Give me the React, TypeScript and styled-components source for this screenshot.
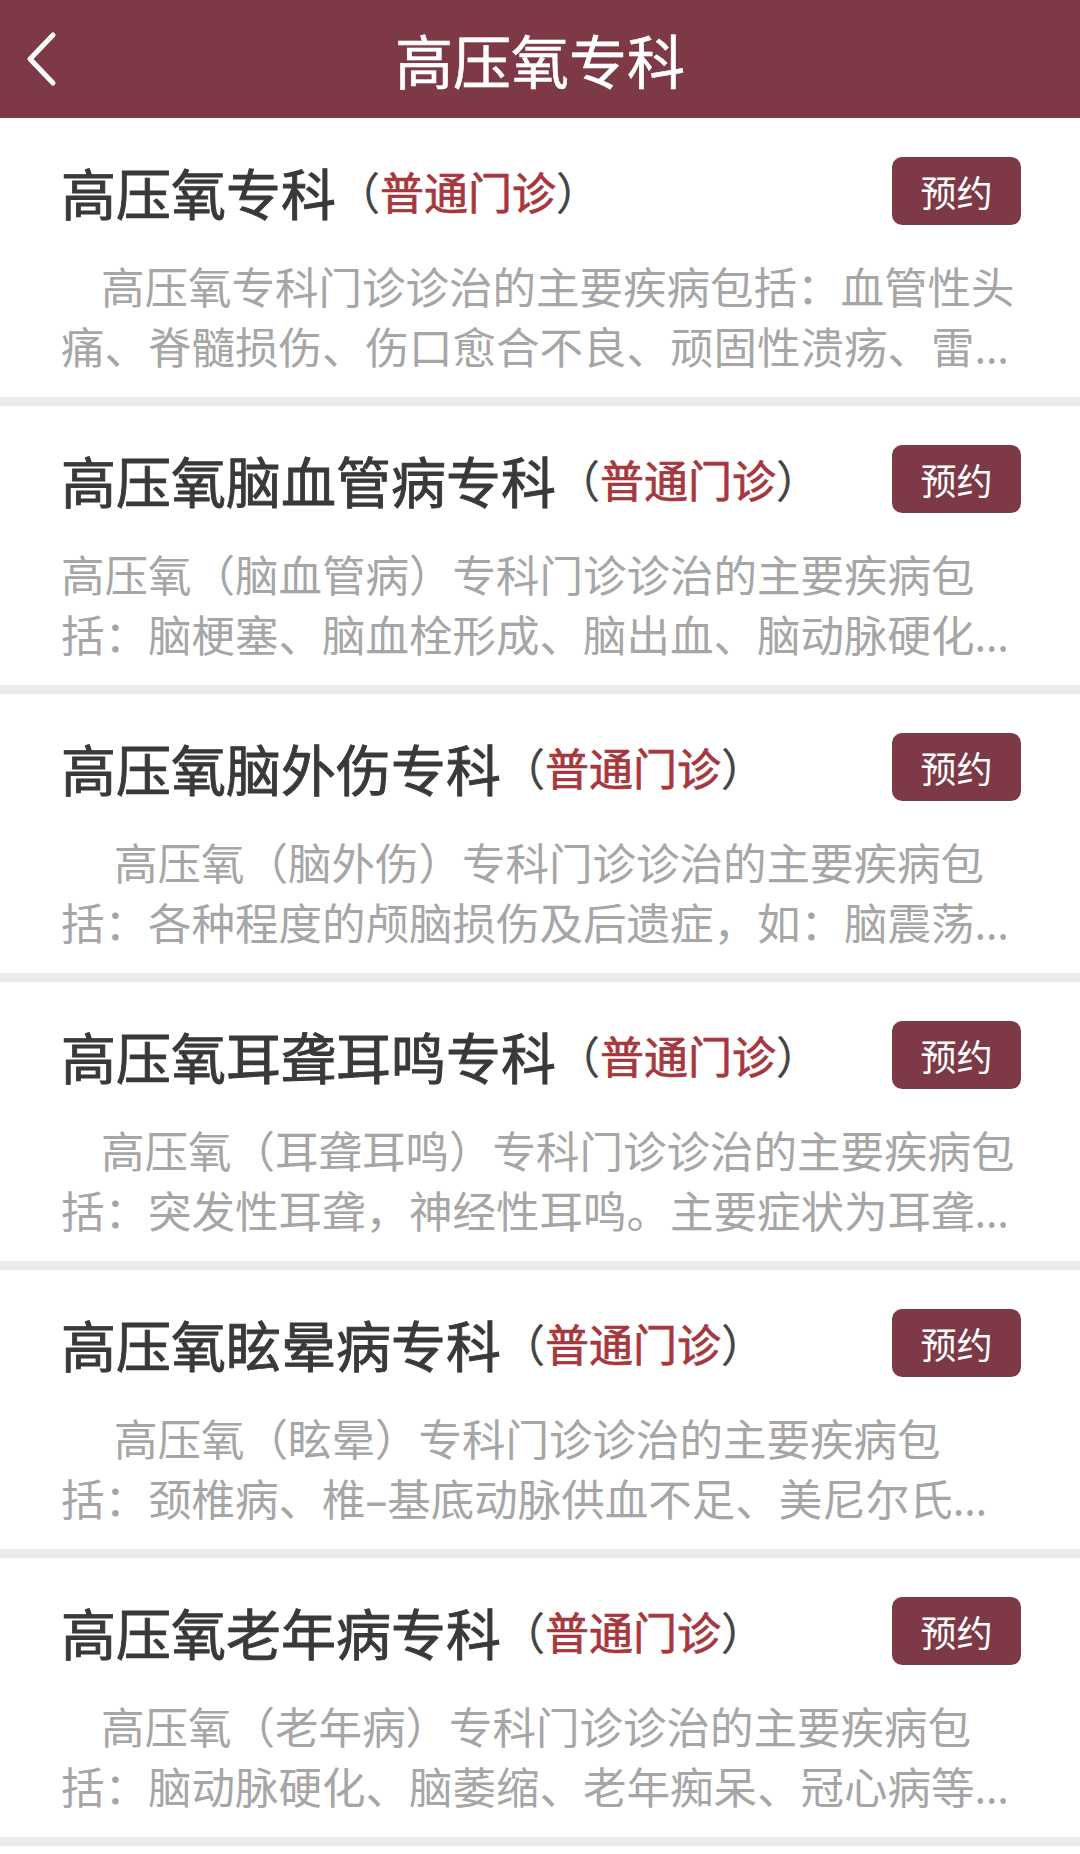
import React from 'react';
import styled, { createGlobalStyle } from 'styled-components';

const GlobalStyle = createGlobalStyle`
  html, body {
    margin: 0;
    padding: 0;
    background: #ffffff;
  }
  body {
    font-family: "Noto Sans CJK SC", "Noto Sans", sans-serif;
  }
`;

type Clinic = {
  name: string;
  desc: string;
  indent: number;
};

const clinics: Clinic[] = [
  {
    name: '高压氧专科',
    desc: '高压氧专科门诊诊治的主要疾病包括：血管性头痛、脊髓损伤、伤口愈合不良、顽固性溃疡、雷诺氏病、糖尿病足等疾病。',
    indent: 40,
  },
  {
    name: '高压氧脑血管病专科',
    desc: '高压氧（脑血管病）专科门诊诊治的主要疾病包括：脑梗塞、脑血栓形成、脑出血、脑动脉硬化、脑供血不足等疾病。',
    indent: 0,
  },
  {
    name: '高压氧脑外伤专科',
    desc: '高压氧（脑外伤）专科门诊诊治的主要疾病包括：各种程度的颅脑损伤及后遗症，如：脑震荡、脑挫裂伤等疾病。',
    indent: 53,
  },
  {
    name: '高压氧耳聋耳鸣专科',
    desc: '高压氧（耳聋耳鸣）专科门诊诊治的主要疾病包括：突发性耳聋，神经性耳鸣。主要症状为耳聋、耳鸣、眩晕等。',
    indent: 40,
  },
  {
    name: '高压氧眩晕病专科',
    desc: '高压氧（眩晕）专科门诊诊治的主要疾病包括：颈椎病、椎–基底动脉供血不足、美尼尔氏综合征等疾病。',
    indent: 53,
  },
  {
    name: '高压氧老年病专科',
    desc: '高压氧（老年病）专科门诊诊治的主要疾病包括：脑动脉硬化、脑萎缩、老年痴呆、冠心病等疾病。',
    indent: 40,
  },
];

const Page = styled.div`
  width: 1080px;
  min-height: 1854px;
  background: #ffffff;
`;

const Header = styled.header`
  height: 118px;
  background: #7d3a46;
  display: grid;
  grid-template-columns: 1fr auto 1fr;
  align-items: center;
`;

const BackButton = styled.button`
  justify-self: start;
  margin-left: 22px;
  width: 40px;
  height: 60px;
  padding: 0;
  border: none;
  background: transparent;
  display: flex;
  align-items: center;
  justify-content: center;
  cursor: pointer;
`;

const HeaderTitle = styled.h1`
  margin: 0;
  font-size: 58px;
  font-weight: 400;
  color: #ffffff;
  line-height: 1;
  -webkit-text-stroke: 0.6px #ffffff;
`;

const List = styled.div`
  display: flex;
  flex-direction: column;
`;

const Card = styled.div`
  background: #ffffff;
  padding: 39px 59px 20px 61px;
  border-bottom: 9px solid #ececec;
  display: flex;
  flex-direction: column;
  gap: 32px;
`;

const TopRow = styled.div`
  height: 68px;
  display: flex;
  align-items: center;
  justify-content: space-between;
`;

const Title = styled.div`
  display: flex;
  align-items: center;
  white-space: nowrap;
  font-size: 55px;
  color: #393939;
  line-height: 68px;
  -webkit-text-stroke: 0.9px #393939;
`;

const Tag = styled.span`
  font-size: 44px;
  color: #444444;
  -webkit-text-stroke: 0.3px #444444;
`;

const TagText = styled.span`
  color: #a6373d;
  -webkit-text-stroke: 0.7px #a6373d;
`;

const BookButton = styled.button`
  width: 129px;
  height: 68px;
  border: none;
  border-radius: 10px;
  background: #7d3a46;
  color: #ffffff;
  font-family: inherit;
  font-size: 36px;
  line-height: 1;
  padding: 0;
  cursor: pointer;
`;

const Desc = styled.p<{ $indent: number }>`
  margin: 0;
  width: 958px;
  font-family: "Noto Sans", "Noto Sans CJK SC", sans-serif;
  font-size: 43.5px;
  line-height: 60px;
  color: #a6a6a6;
  text-indent: ${(p) => p.$indent}px;
  display: -webkit-box;
  -webkit-box-orient: vertical;
  -webkit-line-clamp: 2;
  overflow: hidden;
`;

const ChevronLeft = () => (
  <svg width="34" height="56" viewBox="0 0 34 56">
    <path
      d="M28 4 L5 28 L28 52"
      fill="none"
      stroke="#ffffff"
      strokeWidth="5"
      strokeLinecap="round"
      strokeLinejoin="round"
    />
  </svg>
);

export default function App() {
  return (
    <Page>
      <GlobalStyle />
      <Header>
        <BackButton aria-label="返回">
          <ChevronLeft />
        </BackButton>
        <HeaderTitle>高压氧专科</HeaderTitle>
        <span />
      </Header>
      <List>
        {clinics.map((c) => (
          <Card key={c.name}>
            <TopRow>
              <Title>
                {c.name}
                <Tag>
                  （<TagText>普通门诊</TagText>）
                </Tag>
              </Title>
              <BookButton>预约</BookButton>
            </TopRow>
            <Desc $indent={c.indent}>{c.desc}</Desc>
          </Card>
        ))}
      </List>
    </Page>
  );
}
